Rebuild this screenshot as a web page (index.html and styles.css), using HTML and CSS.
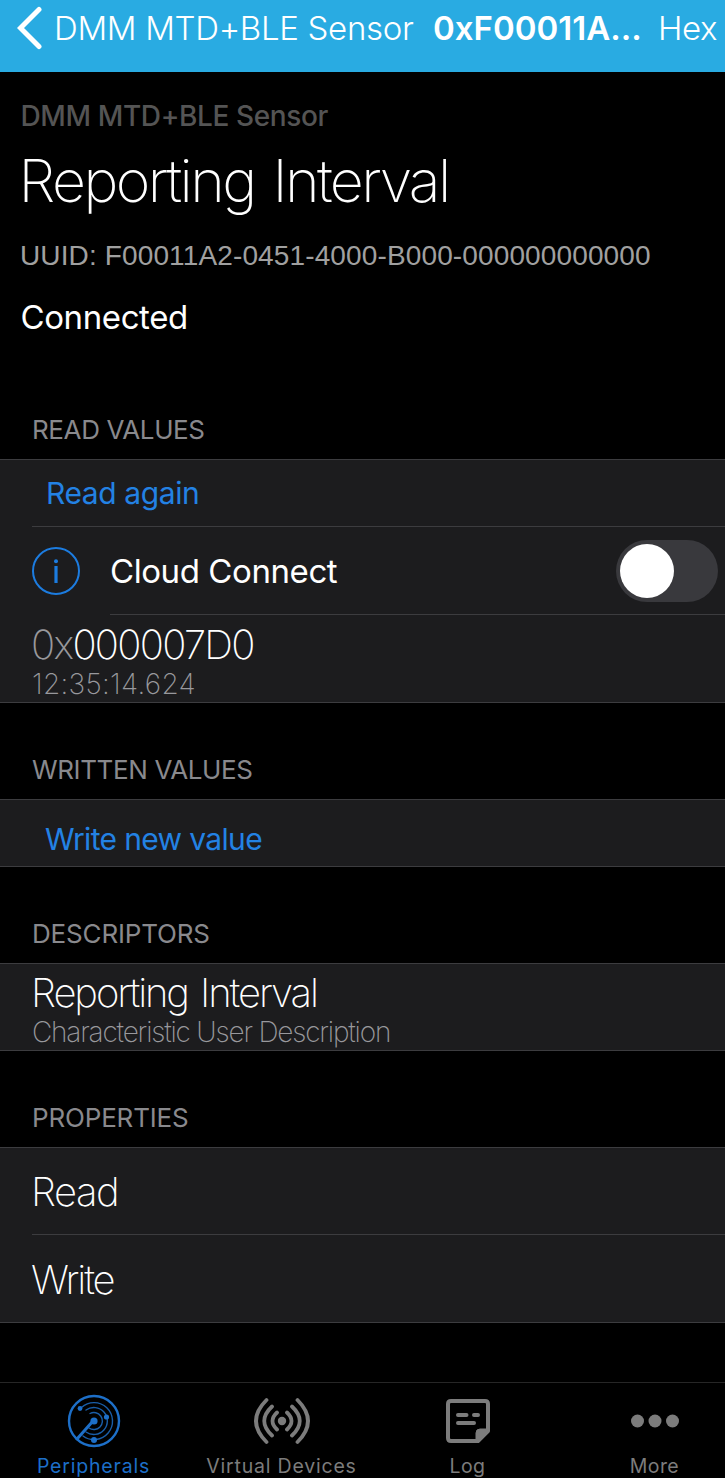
FILE: index.html
```html
<!DOCTYPE html>
<html lang="en">
<head>
<meta charset="utf-8">
<title>Reporting Interval</title>
<link rel="stylesheet" href="styles.css">
</head>
<body>
<div class="screen">
  <header class="navbar">
    <svg class="chevron" width="26" height="44" viewBox="0 0 26 44"><path d="M22 3.5 L3.500 22 L22 40.5" fill="none" stroke="#fff" stroke-width="5" stroke-linecap="round" stroke-linejoin="miter"/></svg>
    <span class="nav-back">DMM MTD+BLE Sensor</span>
    <span class="nav-title">0xF00011A...</span>
    <span class="nav-action">Hex</span>
  </header>
  <section class="summary">
    <div class="device">DMM MTD+BLE Sensor</div>
    <h1 class="title">Reporting Interval</h1>
    <div class="uuid">UUID: F00011A2-0451-4000-B000-000000000000</div>
    <div class="status">Connected</div>
  </section>
  <main class="list">
    <h2 class="heading heading-first">READ VALUES</h2>
    <div class="group">
      <div class="row row-action"><span class="link link-read">Read again</span></div>
      <div class="row row-cloud">
        <svg class="info" width="48" height="48" viewBox="0 0 48 48"><circle cx="24" cy="24" r="23" fill="none" stroke="#1c7ce0" stroke-width="2"/><circle cx="24" cy="14.2" r="2" fill="#1c7ce0"/><path d="M24 19V36" stroke="#1c7ce0" stroke-width="3.2"/></svg>
        <div class="cloud-body"><span class="cloud-label">Cloud Connect</span><div class="switch"><div class="knob"></div></div></div>
      </div>
      <div class="row row-value">
        <div class="value hex"><span class="prefix">0x</span>000007D0</div>
        <div class="sub time">12:35:14.624</div>
      </div>
    </div>
    <h2 class="heading">WRITTEN VALUES</h2>
    <div class="group">
      <div class="row row-write"><span class="link link-write">Write new value</span></div>
    </div>
    <h2 class="heading heading-wide">DESCRIPTORS</h2>
    <div class="group">
      <div class="row row-value row-descriptor">
        <div class="value descriptor">Reporting Interval</div>
        <div class="sub kind">Characteristic User Description</div>
      </div>
    </div>
    <h2 class="heading heading-wide">PROPERTIES</h2>
    <div class="group">
      <div class="row row-property row-inset">Read</div>
      <div class="row row-property row-last">Write</div>
    </div>
  </main>
  <nav class="tabs">
    <div class="tab tab-active">
      <svg width="56" height="56" viewBox="0 0 56 56" fill="none" stroke="#1d6fc8" stroke-linecap="round">
        <circle cx="28" cy="28" r="25" stroke-width="2.4"/>
        <g stroke="#1a5ea8" stroke-width="1.400">
          <path d="M15.500 14.500A18.500 18.500 0 1 1 17 43"/>
          <path d="M20 17A13.500 13.500 0 1 1 20 39"/>
          <path d="M24 20.500A8.500 8.500 0 1 1 23 35"/>
        </g>
        <path d="M27 28L11 46" stroke-width="3"/>
        <g fill="#1d6fc8" stroke="none"><circle cx="28" cy="28" r="3.600"/><circle cx="14" cy="15.500" r="2.400"/><circle cx="40.500" cy="24" r="2.600"/><circle cx="28" cy="47" r="3"/></g>
      </svg>
      <span class="tab-label">Peripherals</span>
    </div>
    <div class="tab tab-virtual">
      <svg width="60" height="56" viewBox="0 0 60 56" fill="none" stroke="#7c7c7c" stroke-width="3.8" stroke-linecap="round">
        <circle cx="30" cy="28" r="4.2" fill="#7c7c7c" stroke="none"/>
        <path d="M25 19.5Q16 28 25 36.5M35 19.5Q44 28 35 36.5M20 13.5Q4.500 28 20 42.500M40 13.500Q55.500 28 40 42.500M14.500 7Q-6.500 28 14.500 49M45.500 7Q66.500 28 45.500 49"/>
      </svg>
      <span class="tab-label">Virtual Devices</span>
    </div>
    <div class="tab">
      <svg width="48" height="56" viewBox="0 0 48 56" fill="none" stroke="#7c7c7c" stroke-width="4" stroke-linecap="round" stroke-linejoin="round">
        <path d="M4 11Q4 8 7 8H41Q44 8 44 11V38L34 48H7Q4 48 4 45Z"/>
        <path d="M14 22H22.500M30 22H34M14 30H30"/>
        <path d="M44 36H36Q32 36 32 40V48L35 48L44 39Z" fill="#7c7c7c" stroke-width="1"/>
      </svg>
      <span class="tab-label tab-short">Log</span>
    </div>
    <div class="tab">
      <svg width="50" height="56" viewBox="0 0 50 56" fill="#7c7c7c"><circle cx="7.500" cy="28" r="6.500"/><circle cx="25" cy="28" r="6.500"/><circle cx="42.500" cy="28" r="6.500"/></svg>
      <span class="tab-label tab-short">More</span>
    </div>
  </nav>
</div>
</body>
</html>
```
FILE: styles.css
```css
* { box-sizing: border-box; }
body { margin: 0; background: #000; color: #fff; font-family: Inter, "Liberation Sans", sans-serif; }
h1, h2 { margin: 0; font-weight: 400; }
svg { display: block; flex: none; }
.screen { width: 725px; height: 1478px; display: flex; flex-direction: column; overflow: hidden; white-space: nowrap; }

.navbar { height: 72px; flex: none; display: flex; align-items: center; padding: 0 0 16px 17px; background: #29abe2; font-size: 33px; line-height: 56px; }
.nav-back { width: 390px; padding-left: 11px; flex: none; font-weight: 350; letter-spacing: -0.32px; }
.nav-title { width: 225px; flex: none; font-weight: 600; }
.nav-action { font-weight: 350; letter-spacing: -0.4px; }

.summary { height: 316px; flex: none; padding: 24px 0 0 20.5px; }
.device { height: 41px; line-height: 41px; font-size: 28px; font-weight: 550; letter-spacing: -0.38px; color: #545454; }
.title { height: 88px; margin-left: -2px; line-height: 88px; font-size: 59px; font-weight: 200; letter-spacing: -2.6px; word-spacing: 4px; }
.uuid { height: 60px; margin-left: -0.5px; line-height: 62px; font-family: "Liberation Sans", sans-serif; font-size: 28px; letter-spacing: 0.13px; color: #a0a0a0; }
.status { height: 64px; line-height: 64px; font-size: 33px; letter-spacing: -0.4px; }

.list { flex: 1; }
.heading { height: 96px; padding: 40px 0 0 32px; font-size: 26px; line-height: 54px; letter-spacing: -0.38px; color: #89898d; }
.heading-first { height: 71px; padding-top: 15px; }
.heading-wide { letter-spacing: -0.17px; }
.group { background: #1c1c1e; border-top: 1px solid #3c3c3f; border-bottom: 1px solid #3c3c3f; }
.row { display: flex; align-items: center; }
.row-action { height: 67px; margin-left: 32px; padding-left: 14px; border-bottom: 1px solid #3c3c3f; }
.link { font-size: 30px; font-weight: 400; color: #2382e4; }
.link-read { letter-spacing: -0.4px; }
.link-write { letter-spacing: -0.65px; }
.row-cloud { height: 88px; padding-left: 32px; }
.cloud-body { flex: 1; height: 88px; margin-left: 30px; padding-right: 7px; border-bottom: 1px solid #3c3c3f; display: flex; align-items: center; justify-content: space-between; }
.cloud-label { font-size: 33px; letter-spacing: -0.42px; }
.switch { width: 102px; height: 62px; border-radius: 31px; background: #39393d; padding: 4px; }
.knob { width: 54px; height: 54px; border-radius: 50%; background: #fff; }
.row-value { height: 87px; padding-left: 32px; flex-direction: column; align-items: flex-start; font-weight: 200; }
.value { height: 49px; line-height: 59px; font-size: 40px; }
.sub { height: 38px; line-height: 40px; font-size: 28px; color: #98989c; }
.prefix { color: #98989c; }
.hex { margin-left: -1px; letter-spacing: -1.7px; }
.time { letter-spacing: 0.3px; }
.row-descriptor { height: 86px; }
.descriptor { height: 48px; margin-left: -1px; line-height: 57px; letter-spacing: -2.1px; word-spacing: 3px; }
.kind { letter-spacing: -1.2px; }
.row-write { height: 66px; padding: 12px 0 0 45px; }
.row-property { height: 87px; padding-left: 31px; font-size: 40px; font-weight: 200; letter-spacing: -1.5px; }
.row-inset { margin-left: 32px; padding: 1px 0 0; text-indent: -1px; border-bottom: 1px solid #3c3c3f; }
.row-last { padding-top: 2px; letter-spacing: -2.1px; }

.tabs { height: 96px; flex: none; display: flex; border-top: 1px solid #262626; }
.tab { width: 187px; flex: none; display: flex; flex-direction: column; align-items: center; padding-top: 10px; color: #7c7c7c; font-size: 19.5px; line-height: 34px; font-weight: 400; }
.tab-virtual { padding-left: 2px; }
.tab-label { letter-spacing: 0.8px; }
.tab-short { letter-spacing: 0.4px; }
.tab-active { color: #1d6fc8; }
```
